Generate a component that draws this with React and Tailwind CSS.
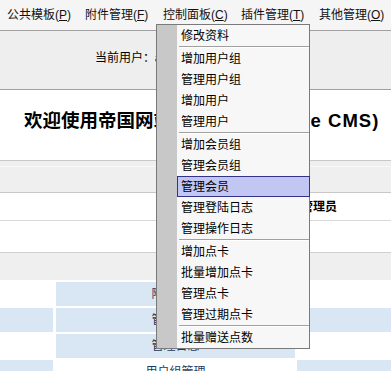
import React from "react";

const menuBar = [
  ["公共模板", "P"],
  ["附件管理", "F"],
  ["控制面板", "C"],
  ["插件管理", "T"],
  ["其他管理", "O"],
];

// null = separator
const dropItems = [
  "修改资料",
  null,
  "增加用户组",
  "管理用户组",
  "增加用户",
  "管理用户",
  null,
  "增加会员组",
  "管理会员组",
  "管理会员",
  "管理登陆日志",
  "管理操作日志",
  null,
  "增加点卡",
  "批量增加点卡",
  "管理点卡",
  "管理过期点卡",
  null,
  "批量赠送点数",
];

const linkRows = [
  { text: "附件管理", left: false, mid: true, right: false },
  { text: "管理信息", left: true, mid: true, right: true },
  { text: "管理日志", left: false, mid: true, right: false },
  { text: "用户组管理", left: true, mid: false, right: true },
];

function DropMenu() {
  return (
    <div className="absolute left-[156px] top-[24px] w-[154px] border border-[#7a7a7a] bg-[#f7f7f7] flex">
      <div className="w-[20px] shrink-0 bg-[#c8c8c8]" />
      <div className="flex-1 flex flex-col">
        {dropItems.map((item, i) =>
          item === null ? (
            <div key={i} className="ml-[2px] h-[2px] border-t border-[#a0a0a0] border-b border-b-white" />
          ) : item === "管理会员" ? (
            <div
              key={i}
              className="h-[21px] -mr-px border border-[#33338a] bg-[#c2c6f2] pl-[3px] flex items-center text-[12px] text-black"
            >
              {item}
            </div>
          ) : (
            <div key={i} className="h-[21px] pl-[4px] flex items-center text-[12px] text-black">
              {item}
            </div>
          )
        )}
      </div>
    </div>
  );
}

export default function App() {
  return (
    <div
      className="relative w-[391px] h-[371px] overflow-hidden bg-white text-black"
      style={{ fontFamily: '"Liberation Sans", "Noto Sans CJK SC", sans-serif' }}
    >
      {/* menu bar */}
      <div className="h-[30px] bg-[#f5f5f5] flex items-center text-[12px] text-[#111]">
        {menuBar.map(([label, key]) => (
          <span key={key} className="w-[78px] shrink-0 pl-[7px] whitespace-nowrap">
            {label}(<span className="underline">{key}</span>)
          </span>
        ))}
      </div>

      {/* user info */}
      <div className="h-[60px] border-y border-[#a0a0a0] bg-[#eeeeee] pl-[95px] pt-[19px] text-[12px] leading-[16px]">
        当前用户：<b>admin</b>
      </div>

      {/* title */}
      <div className="h-[70px] pt-[19px] pl-[24px] text-[18.5px] leading-[24px] font-bold whitespace-nowrap">
        欢迎使用帝国网站管理系统<span className="tracking-[1px]">(Empire CMS)</span>
      </div>

      {/* info table */}
      <div className="border-t border-[#c8c8c8] h-[32px] bg-[#efefef]">
        <div className="h-[6px] border-b border-[#f8f8f8]" />
      </div>
      <div className="border-t border-[#c8c8c8] h-[28px] flex items-center justify-end pr-[54px] text-[12px] font-bold">
        超级管理员
      </div>
      <div className="border-t border-[#d8d8d8] h-[32px]" />
      <div className="border-t border-[#d0d0d0] h-[28px] bg-[#efefef]" />

      {/* link table */}
      <div className="pt-[2px] flex flex-col gap-[2px] text-[12px] text-[#1f3b63]">
        {linkRows.map((r) => (
          <div key={r.text} className="h-[24px] flex">
            <div className={`w-[53px] ${r.left ? "bg-[#d9e6f3]" : "bg-white"}`} />
            <div
              className={`ml-[3px] w-[239px] flex items-center justify-center ${
                r.mid ? "bg-[#d9e6f3]" : "bg-white"
              }`}
            >
              {r.text}
            </div>
            <div className={`ml-[2px] flex-1 ${r.right ? "bg-[#d9e6f3]" : "bg-white"}`} />
          </div>
        ))}
      </div>

      <DropMenu />
    </div>
  );
}
